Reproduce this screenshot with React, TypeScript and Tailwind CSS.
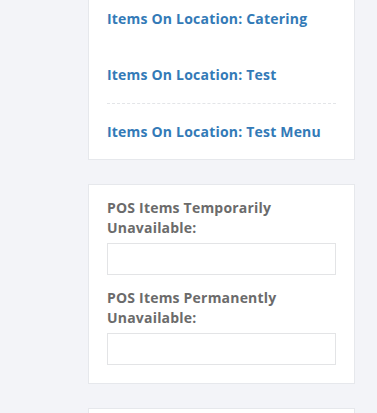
import React from "react";

const locations = [
  { name: "Catering", divider: false },
  { name: "Test", divider: true },
  { name: "Test Menu", divider: false },
];

const fields = ["POS Items Temporarily Unavailable:", "POS Items Permanently Unavailable:"];

const App = () => {
  return (
    <div
      className="min-h-screen bg-[#f3f4f8] pl-[88px] overflow-hidden"
      style={{ fontFamily: '"Open Sans", "Liberation Sans", sans-serif' }}
    >
      <div className="w-[267px] bg-white border border-t-0 border-[#e6e8ec] px-[18px]">
        {locations.map((loc, i) => (
          <div
            key={loc.name}
            className={`${i === 0 ? "pt-[9px]" : "pt-[18px]"} ${
              i === locations.length - 1 ? "pb-[17px]" : "pb-[18px]"
            } ${loc.divider ? "border-b border-dashed border-[#e3e5e8]" : ""}`}
          >
            <a className="block text-[14px] leading-5 font-bold tracking-[0.2px] text-[#337ab7]">
              Items On Location: {loc.name}
            </a>
          </div>
        ))}
      </div>

      <div className="mt-6 w-[267px] bg-white border border-[#e6e8ec] px-[18px] pt-[13px] pb-[18px]">
        {fields.map((label, i) => (
          <div key={label} className={i > 0 ? "mt-[13px]" : ""}>
            <label className="block text-[14px] leading-5 font-bold tracking-[0.2px] text-[#6b6b6b] pr-8">
              {label}
            </label>
            <input
              type="text"
              className="mt-[5px] block w-full h-8 border border-[#e3e4e6] bg-white outline-none"
            />
          </div>
        ))}
      </div>

      <div className="mt-6 w-[267px] h-20 bg-white border border-[#e6e8ec]" />
    </div>
  );
};

export default App;
